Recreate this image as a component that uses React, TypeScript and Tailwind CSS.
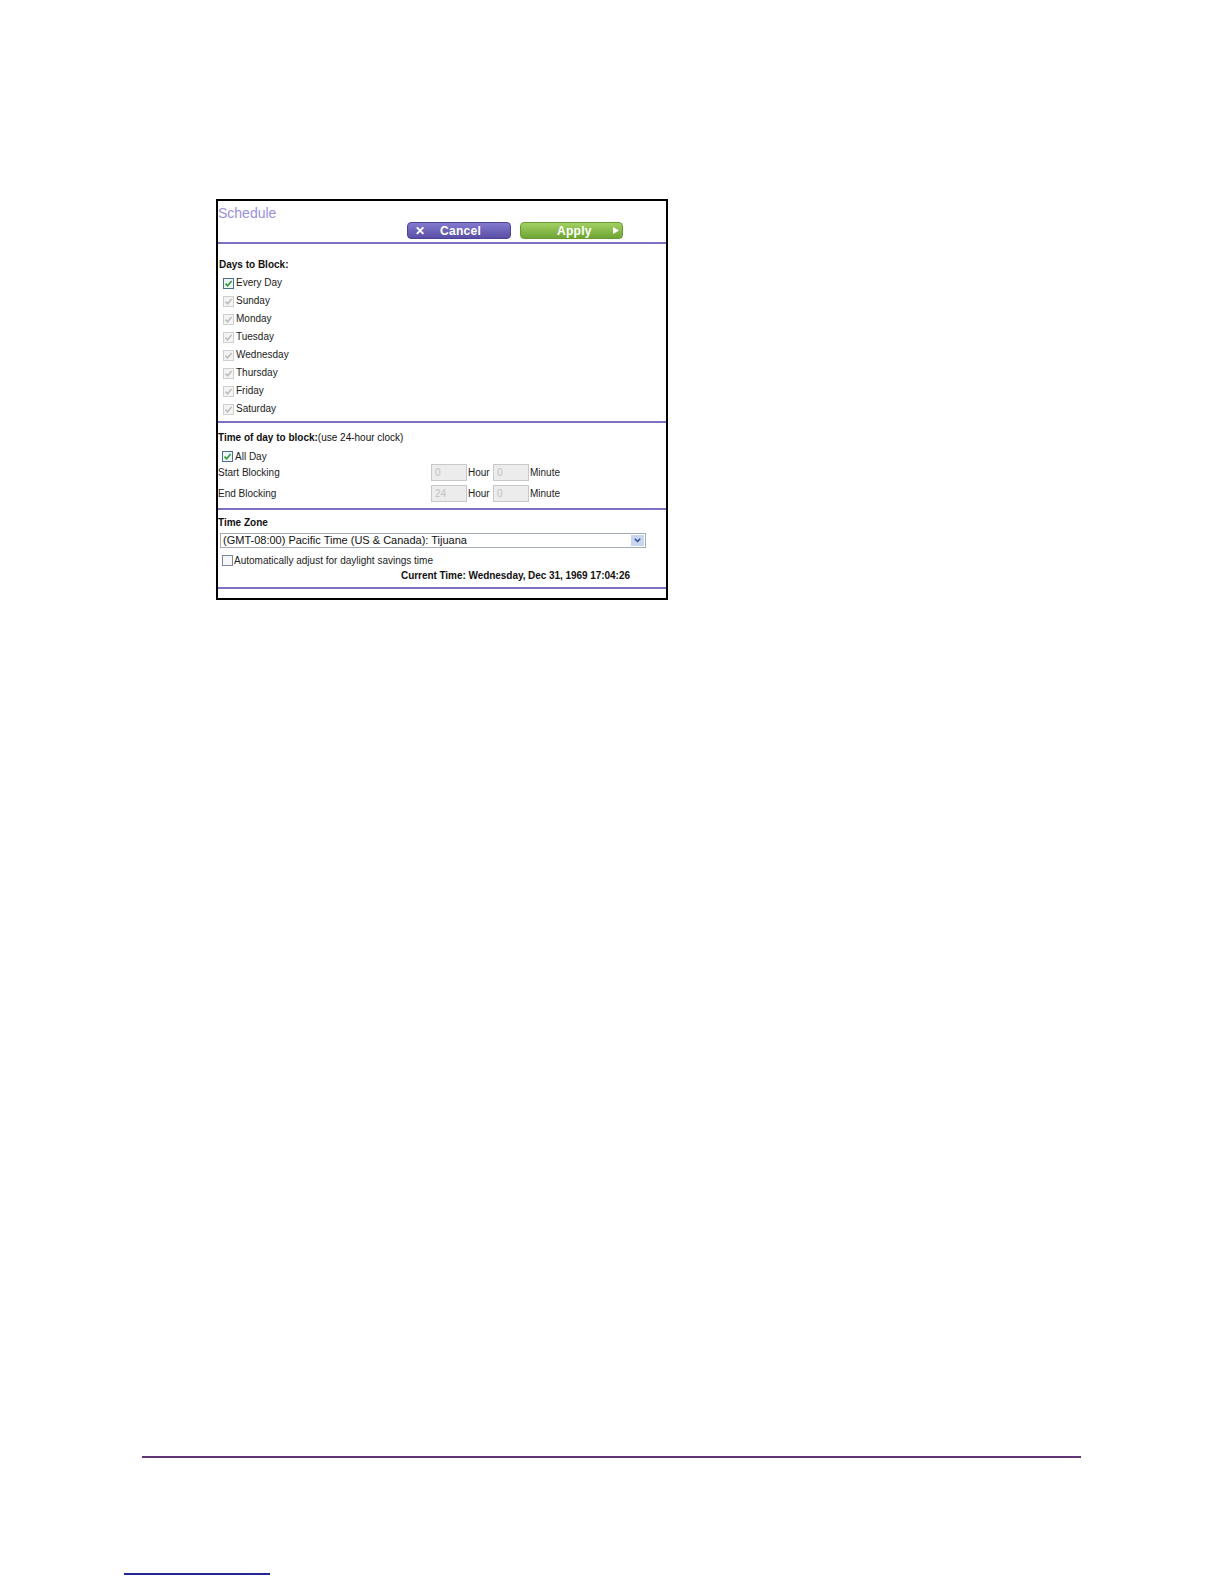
import React from 'react'

const font = "font-['Liberation_Sans',Arial,sans-serif]"

function Check({ checked, disabled }: { checked?: boolean; disabled?: boolean }) {
  return (
    <span
      className={
        'flex h-[11px] w-[11px] items-center justify-center border ' +
        (disabled ? 'border-[#cfcfcf] bg-[#f4f4f4]' : 'border-[#48708c] bg-[#eef4f8]')
      }
    >
      {checked && (
        <svg width="9" height="9" viewBox="0 0 9 9">
          <path
            d="M1.5 4.6 L3.6 6.7 L7.6 2"
            fill="none"
            stroke={disabled ? '#bdbdbd' : '#2f9e32'}
            strokeWidth="1.6"
          />
        </svg>
      )}
    </span>
  )
}

function DayRow({ label, disabled }: { label: string; disabled?: boolean }) {
  return (
    <div className="flex h-[18px] items-center pl-[5px]">
      <Check checked disabled={disabled} />
      <span className="ml-[2px] text-[10px] leading-none text-[#222]">{label}</span>
    </div>
  )
}

function TimeInput({ value }: { value: string }) {
  return (
    <span className="flex h-[17px] w-[36px] items-center border border-[#c8c8c8] bg-[#ececec] pl-[3px] text-[10px] text-[#c2c2c2]">
      {value}
    </span>
  )
}

function TimeRow({ label, hour }: { label: string; hour: string }) {
  return (
    <div className="flex h-[17px] items-center text-[10px] text-[#222]">
      <span className="w-[213px]">{label}</span>
      <TimeInput value={hour} />
      <span className="ml-[1px] w-[25px]">Hour</span>
      <TimeInput value="0" />
      <span className="ml-[1px]">Minute</span>
    </div>
  )
}

const Rule = ({ className }: { className: string }) => (
  <div className={'h-[2px] bg-[#7d72c2] ' + className} />
)

export default function App() {
  const days = ['Sunday', 'Monday', 'Tuesday', 'Wednesday', 'Thursday', 'Friday', 'Saturday']
  return (
    <div className={'flex h-[1584px] w-[1224px] flex-col bg-white ' + font}>
      {/* Schedule screen capture */}
      <div className="ml-[216px] mt-[199px] flex h-[401px] w-[452px] flex-col border-2 border-black bg-white">
        {/* Header */}
        <div className="h-[20px] pt-[4px] text-[14px] leading-[16px] text-[#9a90de]">Schedule</div>
        <div className="mt-[1px] flex h-[17px]">
          <button className="ml-[189px] flex h-[17px] w-[104px] items-center rounded-[4px] border border-[#4c4396] bg-gradient-to-b from-[#8379cd] to-[#5a4fa6] text-[12px] font-bold text-white">
            <span className="ml-[7px] text-[12px]">✕</span>
            <span className="ml-[15px] tracking-[0.3px]">Cancel</span>
          </button>
          <button className="ml-[9px] flex h-[17px] w-[103px] items-center rounded-[4px] border border-[#6a9a36] bg-gradient-to-b from-[#a3d162] to-[#6fa534] text-[12px] font-bold text-white">
            <span className="ml-[36px] tracking-[0.3px]">Apply</span>
            <svg className="ml-[21px]" width="6" height="7" viewBox="0 0 6 7">
              <path d="M0 0 L6 3.5 L0 7 Z" fill="white" />
            </svg>
          </button>
        </div>
        <Rule className="mt-[3px]" />

        {/* Days */}
        <div className="mt-[14px] h-[14px] pl-[1px] text-[10px] font-bold leading-[14px] text-[#111]">Days to Block:</div>
        <div className="mt-[2px] flex flex-col">
          <DayRow label="Every Day" />
          {days.map(d => (
            <DayRow key={d} label={d} disabled />
          ))}
        </div>
        <Rule className="mt-[3px]" />

        {/* Time of day */}
        <div className="mt-[8px] h-[14px] text-[10px] leading-[14px] text-[#111]">
          <span className="font-bold">Time of day to block:</span>(use 24-hour clock)
        </div>
        <div className="mt-[3px] flex h-[16px] items-center pl-[4px]">
          <Check checked />
          <span className="ml-[2px] text-[10px] text-[#222]">All Day</span>
        </div>
        <TimeRow label="Start Blocking" hour="0" />
        <div className="mt-[4px]">
          <TimeRow label="End Blocking" hour="24" />
        </div>
        <Rule className="mt-[6px]" />

        {/* Time zone */}
        <div className="mt-[6px] h-[14px] text-[10px] font-bold leading-[14px] text-[#111]">Time Zone</div>
        <div className="ml-[2px] mt-[3px] flex h-[15px] w-[426px] items-center border border-[#a5acb5] bg-white">
          <span className="flex-1 pl-[2px] text-[11px] leading-none text-[#111]">
            (GMT-08:00) Pacific Time (US &amp; Canada): Tijuana
          </span>
          <span className="mr-[1px] flex h-[11px] w-[13px] items-center justify-center bg-[#c9d6ef]">
            <svg width="7" height="5" viewBox="0 0 7 5">
              <path d="M0.8 0.8 L3.5 3.6 L6.2 0.8" fill="none" stroke="#2c4a8c" strokeWidth="1.4" />
            </svg>
          </span>
        </div>
        <div className="mt-[4px] flex h-[16px] items-center pl-[4px]">
          <span className="h-[11px] w-[11px] border border-[#7a8898] bg-[#f4f6f8]" />
          <span className="ml-[1px] text-[10px] text-[#222]">Automatically adjust for daylight savings time</span>
        </div>
        <div className="mt-[1px] h-[14px] pl-[183px] text-[10px] font-bold leading-[14px] tracking-[-0.05px] text-[#111]">
          Current Time: Wednesday, Dec 31, 1969 17:04:26
        </div>
        <Rule className="mt-[4px]" />
      </div>

      {/* Page footer rules */}
      <div className="ml-[142px] mt-[856px] h-[2px] w-[939px] bg-[#5f3572]" />
      <div className="ml-[124px] mt-[115px] h-[2px] w-[146px] bg-[#23239a]" />
    </div>
  )
}
